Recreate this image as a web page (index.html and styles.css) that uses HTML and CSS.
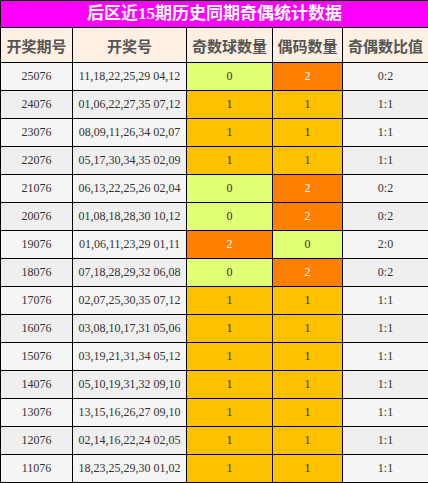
FILE: index.html
```html
<!DOCTYPE html>
<html lang="zh">
<head>
<meta charset="utf-8">
<link rel="stylesheet" href="styles.css">
</head>
<body>
<table class="stats">
  <colgroup>
    <col class="c1"><col class="c2"><col class="c3"><col class="c4"><col class="c5">
  </colgroup>
  <thead>
    <tr class="title-row"><th colspan="5" class="title">后区近15期历史同期奇偶统计数据</th></tr>
    <tr class="head-row">
      <th>开奖期号</th><th>开奖号</th><th>奇数球数量</th><th>偶码数量</th><th>奇偶数比值</th>
    </tr>
  </thead>
  <tbody>
    <tr><td>25076</td><td>11,18,22,25,29 04,12</td><td class="lime">0</td><td class="orange">2</td><td>0:2</td></tr>
    <tr><td>24076</td><td>01,06,22,27,35 07,12</td><td class="amber">1</td><td class="amber">1</td><td>1:1</td></tr>
    <tr><td>23076</td><td>08,09,11,26,34 02,07</td><td class="amber">1</td><td class="amber">1</td><td>1:1</td></tr>
    <tr><td>22076</td><td>05,17,30,34,35 02,09</td><td class="amber">1</td><td class="amber">1</td><td>1:1</td></tr>
    <tr><td>21076</td><td>06,13,22,25,26 02,04</td><td class="lime">0</td><td class="orange">2</td><td>0:2</td></tr>
    <tr><td>20076</td><td>01,08,18,28,30 10,12</td><td class="lime">0</td><td class="orange">2</td><td>0:2</td></tr>
    <tr><td>19076</td><td>01,06,11,23,29 01,11</td><td class="orange">2</td><td class="lime">0</td><td>2:0</td></tr>
    <tr><td>18076</td><td>07,18,28,29,32 06,08</td><td class="lime">0</td><td class="orange">2</td><td>0:2</td></tr>
    <tr><td>17076</td><td>02,07,25,30,35 07,12</td><td class="amber">1</td><td class="amber">1</td><td>1:1</td></tr>
    <tr><td>16076</td><td>03,08,10,17,31 05,06</td><td class="amber">1</td><td class="amber">1</td><td>1:1</td></tr>
    <tr><td>15076</td><td>03,19,21,31,34 05,12</td><td class="amber">1</td><td class="amber">1</td><td>1:1</td></tr>
    <tr><td>14076</td><td>05,10,19,31,32 09,10</td><td class="amber">1</td><td class="amber">1</td><td>1:1</td></tr>
    <tr><td>13076</td><td>13,15,16,26,27 09,10</td><td class="amber">1</td><td class="amber">1</td><td>1:1</td></tr>
    <tr><td>12076</td><td>02,14,16,22,24 02,05</td><td class="amber">1</td><td class="amber">1</td><td>1:1</td></tr>
    <tr><td>11076</td><td>18,23,25,29,30 01,02</td><td class="amber">1</td><td class="amber">1</td><td>1:1</td></tr>
  </tbody>
</table>
</body>
</html>
```
FILE: styles.css
```css
html, body {
  margin: 0;
  padding: 0;
  background: #ffffff;
}

.stats {
  width: 428px;
  table-layout: fixed;
  border-collapse: collapse;
  font-family: "Liberation Serif", "Noto Sans CJK SC", serif;
}

.c1 { width: 72px; }
.c2 { width: 114px; }
.c3 { width: 86px; }
.c4 { width: 70px; }
.c5 { width: 86px; }

.stats th,
.stats td {
  border: 1px solid #000;
  padding: 0;
  text-align: center;
  vertical-align: middle;
}

.title-row { height: 27px; }

.title {
  background: #ff00ff;
  color: #ffffff;
  font-size: 17px;
  font-weight: bold;
  line-height: 24px;
}

.head-row { height: 35px; }

.head-row th {
  background: #fef1e3;
  color: #555555;
  font-family: "Noto Sans CJK SC", sans-serif;
  font-size: 15px;
  font-weight: bold;
}

.stats tbody tr { height: 28px; }

.stats td {
  font-size: 12px;
  color: #333333;
  background: #f5f5f5;
}

.stats tbody tr:nth-child(even) td {
  background: #efefef;
}

.stats tbody tr td.lime { background: #e0ff75; color: #333333; }
.stats tbody tr td.orange { background: #ff8000; color: #ffffff; }
.stats tbody tr td.amber { background: #ffc000; color: #333333; }
```
